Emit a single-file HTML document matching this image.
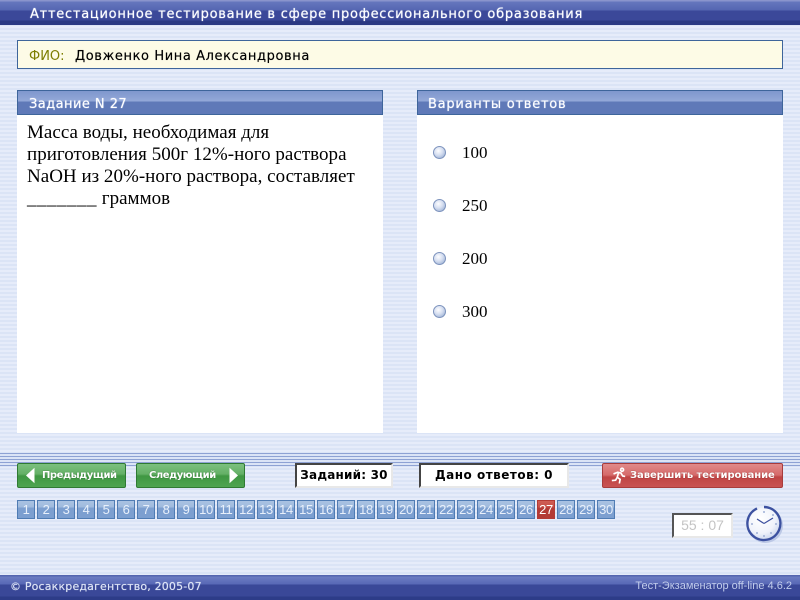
<!DOCTYPE html>
<html lang="ru"><head><meta charset="utf-8"><title>Тест</title>
<style>
html,body{margin:0;padding:0}
body{width:800px;height:600px;overflow:hidden;position:relative;font-family:"DejaVu Sans",sans-serif;
background:repeating-linear-gradient(180deg,#dbe4f6 0,#dbe4f6 2px,#e6ecfa 2px,#e6ecfa 4px)}
.a,.a *{position:absolute}
.t{white-space:nowrap}
.bar{left:0;width:800px}
.hd{top:90px;height:25px;border:1px solid #3e659b;box-sizing:border-box;width:366px;background:linear-gradient(180deg,#7f97cd 0,#93a8d8 10px,#5f79b8 11px,#5f79b8 100%)}
.hd span{top:6px;color:#fff;font-size:13px;text-shadow:0 0 1px #dfe8ff}
.pn{top:115px;height:318px;width:366px;background:#fff}
.q{font-family:"Liberation Serif",serif;font-size:19px;letter-spacing:.02px;line-height:22px;color:#000}
.r{left:433px;width:13px;height:13px;box-sizing:border-box;border-radius:50%;border:1px solid #7d93bd;background:radial-gradient(circle at 40% 35%,#fdfdff 0,#d5def0 45%,#8ba3cc 100%)}
.v{left:462px;font-family:"Liberation Serif",serif;font-size:17px;line-height:20px;color:#000}
.btn{top:463px;height:25px;box-sizing:border-box;border-radius:2px}
.g{border:1px solid #2f7a33;background:linear-gradient(180deg,#7cc07f 0,#64b066 10px,#3f9742 12px,#4ea451 100%)}
.g span{top:6px;color:#fff;font-family:"DejaVu Sans",sans-serif;font-size:10px;font-weight:bold;letter-spacing:-.45px;text-shadow:0 0 1px #1f5c22}
.box{top:463px;height:25px;box-sizing:border-box;background:#fff;border:2px solid;border-color:#444 #e8e8e8 #e8e8e8 #444;color:#000;font-size:12px;font-weight:bold;text-align:center;line-height:21px;white-space:nowrap}
.n{top:500px;width:18px;height:19px;box-sizing:border-box;border:1px solid #4f7cb4;background:linear-gradient(180deg,#a9c2e2 0,#a0bbde 6px,#7c9fd0 7px,#7c9fd0 100%);color:#e8f0fb;font-family:"Liberation Sans",sans-serif;font-size:13px;line-height:18px;text-align:center;letter-spacing:-.4px}
.n.c{background:linear-gradient(180deg,#cf5e55 0,#c9504a 6px,#b33a35 7px,#b33a35 100%);border-color:#b33a35;color:#fff}
</style></head><body>
<div class="a" style="left:0;top:0;width:800px;height:600px">

<div class="bar" style="top:0;height:25px;background:linear-gradient(180deg,#8a94cc 0,#8a94cc 1px,#6576bd 2px,#5566b2 10px,#3b4899 11px,#3b4899 20px,#2a3983 21px,#2a3983 100%)"></div>
<div class="t" style="left:30px;top:7px;color:#fff;font-size:13px;letter-spacing:.74px;text-shadow:0 0 1px #dfe8ff">Аттестационное тестирование в сфере профессионального образования</div>

<div style="left:17px;top:40px;width:766px;height:29px;box-sizing:border-box;border:1px solid #3e659b;background:#fdfbe6"></div>
<div class="t" style="left:29px;top:49px;color:#7d7d00;font-size:13px">ФИО:</div>
<div class="t" style="left:75px;top:49px;color:#000;font-size:13px;letter-spacing:.6px;text-shadow:0 0 .5px #333">Довженко Нина Александровна</div>

<div class="hd" style="left:17px"><span class="t" style="left:11px;letter-spacing:.45px">Задание N 27</span></div>
<div class="pn" style="left:17px"></div>
<div class="hd" style="left:417px"><span class="t" style="left:10px;letter-spacing:.75px">Варианты ответов</span></div>
<div class="pn" style="left:417px"></div>

<div class="q t" style="left:27px;top:122px">Масса воды, необходимая для<br>приготовления 500г 12%-ного раствора<br>NaOH из 20%-ного раствора, составляет<br><span style="position:static;letter-spacing:.5px">_______</span> граммов</div>

<div class="r" style="top:146px"></div><div class="v" style="top:143px">100</div>
<div class="r" style="top:199px"></div><div class="v" style="top:196px">250</div>
<div class="r" style="top:252px"></div><div class="v" style="top:249px">200</div>
<div class="r" style="top:305px"></div><div class="v" style="top:302px">300</div>

<div style="left:0;top:453px;width:800px;height:14px;background:repeating-linear-gradient(180deg,#8ea2d4 0,#8ea2d4 1px,#dbe4f6 1px,#dbe4f6 3px)"></div>

<div class="btn g" style="left:17px;width:109px"><span class="t" style="left:24px">Предыдущий</span>
<svg style="left:7px;top:3px" width="11" height="17" viewBox="0 0 11 17"><path d="M9.5 0.8V16.2L1 8.5Z" fill="#fff"/></svg></div>
<div class="btn g" style="left:136px;width:109px"><span class="t" style="left:12px">Следующий</span>
<svg style="left:91px;top:3px" width="11" height="17" viewBox="0 0 11 17"><path d="M1.5 0.8V16.2L10 8.5Z" fill="#fff"/></svg></div>

<div class="box" style="left:295px;width:98px;letter-spacing:.2px">Заданий: 30</div>
<div class="box" style="left:419px;width:150px;letter-spacing:.5px">Дано ответов: 0</div>

<div class="btn" style="left:602px;width:181px;border:1px solid #a83c3c;background:linear-gradient(180deg,#e08a8a 0,#d66a6a 11px,#bf4444 13px,#c85252 100%)">
<svg style="left:8px;top:3px" width="15" height="18" viewBox="0 0 18 20"><path d="M11.5 2.5a1.8 1.8 0 1 1 0 .1M3 7.5 8 5.5l4 1 2 3.5 3 .5M9 6 7.5 11.5 11 14l-1 5M7.5 11.5 5.5 15 1 15.5" fill="none" stroke="#fff" stroke-width="2"/></svg>
<span class="t" style="left:27px;top:6px;color:#fff;font-size:10px;font-weight:bold;letter-spacing:-.08px;text-shadow:0 0 1px #7a1c1c">Завершить тестирование</span></div>

<div class="n" style="left:17px">1</div><div class="n" style="left:37px">2</div><div class="n" style="left:57px">3</div><div class="n" style="left:77px">4</div><div class="n" style="left:97px">5</div><div class="n" style="left:117px">6</div><div class="n" style="left:137px">7</div><div class="n" style="left:157px">8</div><div class="n" style="left:177px">9</div><div class="n" style="left:197px">10</div><div class="n" style="left:217px">11</div><div class="n" style="left:237px">12</div><div class="n" style="left:257px">13</div><div class="n" style="left:277px">14</div><div class="n" style="left:297px">15</div><div class="n" style="left:317px">16</div><div class="n" style="left:337px">17</div><div class="n" style="left:357px">18</div><div class="n" style="left:377px">19</div><div class="n" style="left:397px">20</div><div class="n" style="left:417px">21</div><div class="n" style="left:437px">22</div><div class="n" style="left:457px">23</div><div class="n" style="left:477px">24</div><div class="n" style="left:497px">25</div><div class="n" style="left:517px">26</div><div class="n c" style="left:537px">27</div><div class="n" style="left:557px">28</div><div class="n" style="left:577px">29</div><div class="n" style="left:597px">30</div>

<div style="left:672px;top:513px;width:61px;height:25px;box-sizing:border-box;background:#fff;border:2px solid;border-color:#555 #e8e8e8 #e8e8e8 #555;color:#c4c4c4;font-family:'Liberation Sans',sans-serif;font-size:14px;line-height:21px;text-align:center;white-space:nowrap">55 : 07</div>

<svg style="left:744px;top:503px" width="40" height="42" viewBox="0 0 40 42">
<defs><radialGradient id="f" cx=".4" cy=".35" r=".75"><stop offset="0" stop-color="#ffffff"/><stop offset=".6" stop-color="#f0f3fb"/><stop offset="1" stop-color="#c3cfea"/></radialGradient></defs>
<circle cx="21.5" cy="22.5" r="17.5" fill="#bcc8e6"/>
<circle cx="20" cy="20.5" r="16" fill="url(#f)"/>
<path d="M13 5.5A16.5 16.5 0 1 0 20 4" fill="none" stroke="#3c51a0" stroke-width="2.4"/>
<path d="M20 20.5 13 16M20 20.5 29 15" stroke="#3c4f9e" stroke-width="1.2" fill="none"/>
<g fill="#9fb0d6"><circle cx="20" cy="9" r="1"/><circle cx="32" cy="21" r="1"/><circle cx="20" cy="33" r="1"/><circle cx="8" cy="21" r="1"/><circle cx="13" cy="30" r="1"/><circle cx="27" cy="30" r="1"/><circle cx="29" cy="12" r="1"/></g>
</svg>

<div class="bar" style="top:575px;height:25px;background:linear-gradient(180deg,#5566b0 0,#5566b0 1px,#6c7cc2 2px,#5868b6 9px,#3a4898 10px,#3a4898 21px,#2d3c88 22px,#2d3c88 100%)"></div>
<div class="t" style="left:10px;top:580px;color:#dde4f6;font-size:11px;letter-spacing:.17px;text-shadow:0 0 .6px #dde4f6">© Росаккредагентство, 2005-07</div>
<div class="t" style="right:8px;top:580px;color:#c2cdec;font-family:'Liberation Sans',sans-serif;font-size:11px">Тест-Экзаменатор off-line 4.6.2</div>
</div>
</body></html>
